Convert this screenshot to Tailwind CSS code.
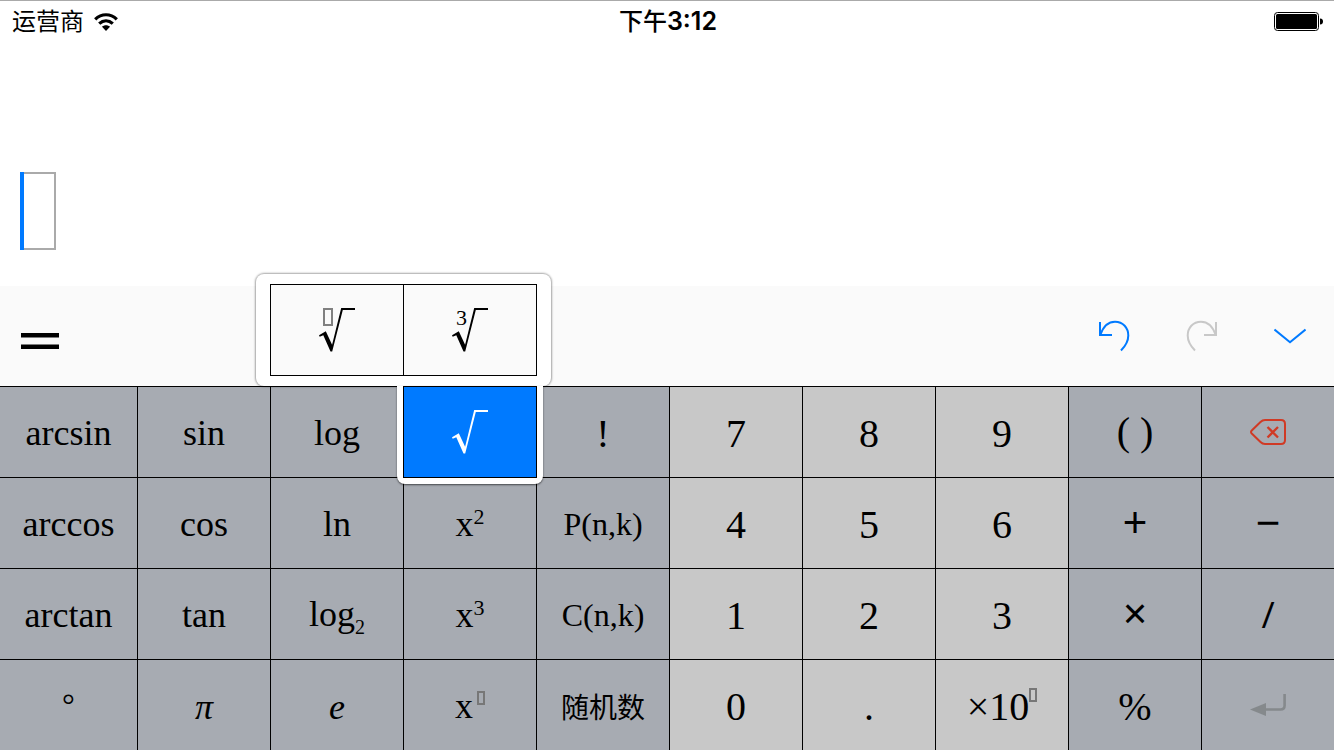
<!DOCTYPE html>
<html lang="zh-CN">
<head>
<meta charset="utf-8">
<meta name="viewport" content="width=device-width, initial-scale=1">
<title>计算器</title>
<script src="https://cdn.jsdelivr.net/npm/@tailwindcss/browser@4"></script>
</head>
<body class="flex min-h-screen flex-col overflow-x-hidden bg-white text-black font-['Liberation_Serif','Noto_Sans_CJK_SC',serif]">
<svg class="hidden" aria-hidden="true">
  <symbol id="radical" viewBox="0 0 36 44">
    <path fill="currentColor" d="M0 27.300 6.800 23.200 13.100 36.800 22.200 0H36V2H23.800L13.200 43.500H11.500L4.300 27.300 0.700 28.800Z"/>
  </symbol>
</svg>

<header class="grid h-10 grid-cols-3 items-center border-t border-[#aaaaaa] pr-2.5 pl-3 text-2xl leading-10 font-['Inter','Noto_Sans_CJK_SC',sans-serif]">
  <div class="flex items-center gap-2.5">
    <span>运营商</span>
    <svg class="h-[18px] w-6" viewBox="0 0 24 18" fill="none" stroke="#000" stroke-width="3.200" aria-label="Wi-Fi">
      <path d="M1.200 6.300C7.500 .2 16.500 .2 22.800 6.300"/>
      <path d="M5.200 10.600C9.300 6.900 14.700 6.900 18.800 10.600"/>
      <path fill="#000" stroke="none" d="M8 13.700C10.200 11.700 13.800 11.700 16 13.700L12 18Z"/>
    </svg>
  </div>
  <time class="text-center font-medium">下午<span class="text-[25px] font-semibold">3:12</span></time>
  <svg class="h-5 w-[50px] justify-self-end" viewBox="0 0 50 20" aria-label="电量">
    <rect x=".5" y=".5" width="44" height="18" rx="3" fill="#fff" stroke="#000"/>
    <rect x="2" y="2" width="41" height="15" rx="1.500"/>
    <path d="M46 6.500C48.500 6.500 49 8 49 9.500S48.500 12.500 46 12.500Z"/>
  </svg>
</header>

<main class="flex flex-1 items-end px-5 pb-9">
  <div role="textbox" aria-label="算式" tabindex="0" class="relative h-[78px] w-9 border-2 border-[#aaaaaa]">
    <span class="absolute -inset-y-0.5 -left-0.5 w-1 bg-[#007aff]"></span>
  </div>
</main>

<nav class="flex h-[100px] items-stretch justify-between bg-[#fafafa]">
  <button aria-label="等于" class="flex w-20 items-center justify-center pt-2.5">
    <svg class="h-4 w-[38px]" viewBox="0 0 38 16"><path d="M0 0H38V4.500H0ZM0 11.500H38V16H0Z"/></svg>
  </button>
  <div class="flex">
    <button aria-label="撤销" class="flex w-[88px] items-center justify-center text-[#007aff]">
      <svg class="size-8" viewBox="0 0 32 32" fill="none" stroke="currentColor" stroke-width="2"><path d="M2 2V15H14M2.500 14.500C5.500 6 10.500 1.700 17 1.700C25 1.700 30.300 8 30.300 15.500C30.300 21 27.500 26 23 30.500"/></svg>
    </button>
    <button aria-label="重做" disabled class="flex w-[88px] items-center justify-center text-[#c8c8c8]">
      <svg class="size-8" viewBox="0 0 32 32" fill="none" stroke="currentColor" stroke-width="2"><path d="M30 2V15H18M29.500 14.500C26.500 6 21.500 1.700 15 1.700C7 1.700 1.700 8 1.700 15.500C1.700 21 4.500 26 9 30.500"/></svg>
    </button>
    <button aria-label="收起键盘" class="flex w-[88px] items-center justify-center text-[#007aff]">
      <svg class="size-8" viewBox="0 0 32 32" fill="none" stroke="currentColor" stroke-width="2"><path d="M.5 9.500 16 22.200 31.500 9.500"/></svg>
    </button>
  </div>
</nav>

<section aria-label="键盘" class="grid grid-cols-[138fr_repeat(8,133fr)_132fr] auto-rows-[91px] bg-[#a7abb2] text-4xl leading-9 *:border-t *:border-r *:border-black">
  <button class="pt-0.5">arcsin</button>
  <button class="pt-0.5">sin</button>
  <button class="pt-0.5">log</button>
  <div class="relative">
    <div class="absolute -right-[15px] bottom-full z-10 mb-px flex rounded-lg bg-white px-3.5 py-2.5 shadow-[0_0_2px_1px_rgba(0,0,0,0.35)]">
      <button aria-label="n 次方根" class="flex h-[92px] w-[134px] items-center justify-center border border-black bg-[#fafafa]">
        <span class="relative flex">
          <span class="absolute top-0 left-1 h-[18px] w-2.5 border-2 border-[#808080]"></span>
          <svg class="h-11 w-9"><use href="#radical"/></svg>
        </span>
      </button>
      <button aria-label="立方根" class="-ml-px flex h-[92px] w-[134px] items-center justify-center border border-black bg-[#fafafa]">
        <span class="relative flex">
          <span class="absolute top-0 left-1 text-[22px] leading-5">3</span>
          <svg class="h-11 w-9"><use href="#radical"/></svg>
        </span>
      </button>
    </div>
    <div class="absolute -top-px -right-[7px] -bottom-[7px] -left-[7px] z-20 rounded-b-lg bg-white px-1.5 pb-1.5 shadow-[0_1px_2px_rgba(0,0,0,0.6)]">
      <button aria-label="平方根" class="flex h-full w-full items-center justify-center border border-black bg-[#007aff] text-white">
        <svg class="h-11 w-9"><use href="#radical"/></svg>
      </button>
    </div>
  </div>
  <button class="pt-1 text-[40px]">!</button>
  <button class="bg-[#c8c8c8] pt-1 text-[40px]">7</button>
  <button class="bg-[#c8c8c8] pt-1 text-[40px]">8</button>
  <button class="bg-[#c8c8c8] pt-1 text-[40px]">9</button>
  <button class="text-[40px]">( )</button>
  <button aria-label="删除" class="flex items-center justify-center border-r-0! text-[#d03a25]">
    <svg class="h-[26px] w-9" viewBox="0 0 36 26" fill="none" stroke="currentColor" stroke-width="2"><path d="M1 13C1 12 1.500 11.700 2 11.200L10.500 3C12 1.500 13 1 15 1H31C33.500 1 35 2.500 35 5V21C35 23.500 33.500 25 31 25H15C13 25 12 24.500 10.500 23L2 14.800C1.500 14.300 1 14 1 13Z"/><path stroke-width="2.300" d="M17.500 8 28 18.500M28 8 17.500 18.500"/></svg>
  </button>

  <button class="pt-0.5">arccos</button>
  <button class="pt-0.5">cos</button>
  <button class="pt-0.5">ln</button>
  <button class="pt-0.5">x<sup class="top-0 align-[12px] text-[22px] leading-[0px]">2</sup></button>
  <button class="pt-0.5 text-[32px]">P(n,k)</button>
  <button class="bg-[#c8c8c8] pt-1 text-[40px]">4</button>
  <button class="bg-[#c8c8c8] pt-1 text-[40px]">5</button>
  <button class="bg-[#c8c8c8] pt-1 text-[40px]">6</button>
  <button class="text-[42px] font-['Liberation_Sans',sans-serif]">+</button>
  <button class="border-r-0! text-[42px] font-['Liberation_Sans',sans-serif]">−</button>

  <button class="pt-0.5">arctan</button>
  <button class="pt-0.5">tan</button>
  <button>log<sub class="bottom-0 align-[-8px] text-[20px] leading-[0px]">2</sub></button>
  <button class="pt-0.5">x<sup class="top-0 align-[12px] text-[22px] leading-[0px]">3</sup></button>
  <button class="pt-0.5 text-[32px]">C(n,k)</button>
  <button class="bg-[#c8c8c8] pt-1 text-[40px]">1</button>
  <button class="bg-[#c8c8c8] pt-1 text-[40px]">2</button>
  <button class="bg-[#c8c8c8] pt-1 text-[40px]">3</button>
  <button class="text-[42px] font-['Liberation_Sans',sans-serif]">×</button>
  <button class="border-r-0! pt-0.5 font-['Open_Sans',sans-serif]">/</button>

  <button class="text-[32px]">°</button>
  <button class="pt-1 italic">π</button>
  <button class="pt-1 italic">e</button>
  <button aria-label="x 的 n 次方" class="flex items-center justify-center gap-1 pt-0.5">x<span class="mb-4 h-3.5 w-2 border-2 border-[#777777]"></span></button>
  <button class="pt-0.5 text-[28px] font-['Noto_Sans_CJK_SC',sans-serif]">随机数</button>
  <button class="bg-[#c8c8c8] pt-1 text-[40px]">0</button>
  <button class="bg-[#c8c8c8] pt-1 text-[40px]">.</button>
  <button aria-label="乘以 10 的 n 次方" class="flex items-center justify-center bg-[#c8c8c8] pt-1 text-[40px]">×10<span class="mb-6 h-3.5 w-2 border-2 border-[#777777]"></span></button>
  <button class="pt-1 text-[40px]">%</button>
  <button aria-label="换行" disabled class="flex items-center justify-center border-r-0! text-[#85898c]">
    <svg class="h-[22px] w-9" viewBox="0 0 36 22"><path fill="currentColor" d="M0 15.500 16 9V22Z"/><path fill="none" stroke="currentColor" stroke-width="2.600" d="M15 15.500H30.500C33.500 15.500 34.600 14 34.600 11.500V0"/></svg>
  </button>
</section>
</body>
</html>
